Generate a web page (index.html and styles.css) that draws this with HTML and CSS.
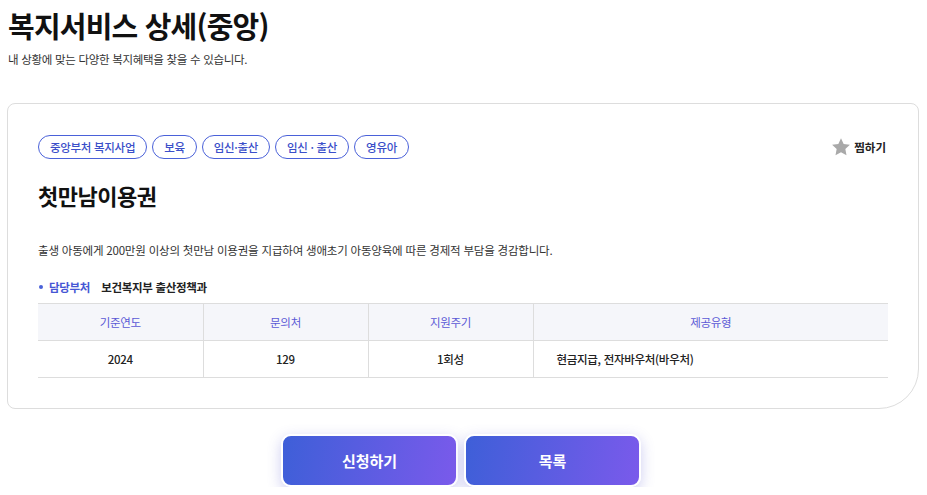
FILE: index.html
```html
<!DOCTYPE html>
<html lang="ko">
<head>
	<meta charset="utf-8">
	<title>복지서비스 상세(중앙)</title>
	<link rel="stylesheet" href="styles.css">
</head>
<body>
	<div class="page">
		<div class="page_head">
			<h1>복지서비스 상세(중앙)</h1>
			<p>내 상황에 맞는 다양한 복지혜택을 찾을 수 있습니다.</p>
		</div>

		<div class="card">
			<div class="card_top">
				<ul class="tags">
					<li>중앙부처 복지사업</li>
					<li>보육</li>
					<li>임신·출산</li>
					<li>임신 · 출산</li>
					<li>영유아</li>
				</ul>
				<button class="fav" type="button">
					<svg width="20" height="20" viewBox="0 0 24 24"><path d="M12 1.5l3.2 6.9 7.5.9-5.5 5.2 1.4 7.5L12 18.3 5.4 22l1.4-7.5L1.3 9.3l7.5-.9z" fill="#a9a9a9"/></svg>
					찜하기
				</button>
			</div>

			<h2 class="svc_title">첫만남이용권</h2>
			<p class="svc_desc">출생 아동에게 200만원 이상의 첫만남 이용권을 지급하여 생애초기 아동양육에 따른 경제적 부담을 경감합니다.</p>

			<dl class="dept">
				<dt>담당부처</dt>
				<dd>보건복지부 출산정책과</dd>
			</dl>

			<table class="info">
				<thead>
					<tr>
						<th class="c1">기준연도</th>
						<th class="c2">문의처</th>
						<th class="c3">지원주기</th>
						<th>제공유형</th>
					</tr>
				</thead>
				<tbody>
					<tr>
						<td>2024</td>
						<td>129</td>
						<td>1회성</td>
						<td class="left">현금지급, 전자바우처(바우처)</td>
					</tr>
				</tbody>
			</table>
		</div>

		<div class="actions">
			<a class="btn" href="#">신청하기</a>
			<a class="btn" href="#">목록</a>
		</div>
	</div>
</body>
</html>
```

FILE: styles.css
```css
* { box-sizing: border-box; }
html, body { margin: 0; padding: 0; }
body { font-family: "Noto Sans CJK KR", "Noto Sans", sans-serif; color: #222; background: #fff; }

.page { padding: 0 8px 0 7px; }

.page_head h1 { margin: 0; padding: 4px 0 0 1px; font-size: 29px; font-weight: 700; line-height: 42px; letter-spacing: -0.8px; color: #111; }
.page_head p { margin: 5px 0 0 1px; font-size: 11.5px; line-height: 16px; letter-spacing: -0.3px; color: #333; }

.card { margin-top: 36px; padding: 31px 30px 30px 30px; border: 1px solid #ddd; border-radius: 8px 8px 40px 8px; }
.card_top { display: flex; justify-content: space-between; align-items: center; }

.tags { display: flex; gap: 5px; margin: 0; padding: 0; list-style: none; }
.tags li { height: 24px; padding: 0 11px; border: 1px solid #4a61d9; border-radius: 12px; font-size: 11.5px; font-weight: 500; line-height: 22px; letter-spacing: -0.3px; color: #3b4fc9; }

.fav { display: flex; align-items: center; gap: 3px; margin-right: 2px; padding: 0; border: 0; background: none; font-family: inherit; font-size: 11.5px; font-weight: 700; color: #222; }

.svc_title { margin: 21px 0 0; font-size: 22px; font-weight: 700; line-height: 30px; letter-spacing: -0.5px; color: #111; }
.svc_desc { margin: 32px 0 0; font-size: 11.5px; line-height: 16px; letter-spacing: -0.2px; color: #333; }

.dept { display: flex; align-items: center; margin: 21px 0 0; font-size: 11.5px; line-height: 16px; letter-spacing: -0.3px; }
.dept dt { position: relative; padding-left: 11px; font-weight: 700; color: #4656d4; }
.dept dt:before { content: ""; position: absolute; left: 1px; top: 6px; width: 4px; height: 4px; border-radius: 50%; background: #4a61d9; }
.dept dd { margin: 0 0 0 11px; font-weight: 700; color: #222; }

.info { width: 100%; margin-top: 8px; border-collapse: collapse; font-size: 11.5px; letter-spacing: -0.3px; }
.info th, .info td { height: 37px; border-top: 1px solid #ddd; border-bottom: 1px solid #ddd; text-align: center; }
.info th + th, .info td + td { border-left: 1px solid #ddd; }
.info th { background: #f5f6fa; font-weight: 400; color: #5b59d6; }
.info td { font-weight: 500; color: #222; }
.info .c1, .info .c2, .info .c3 { width: 165px; }
.info td.left { padding-left: 23px; text-align: left; }

.actions { display: flex; justify-content: center; gap: 6px; margin: 25px 0 0 -4px; }
.btn { display: flex; align-items: center; justify-content: center; width: 177px; height: 53px; border: 2px solid #fff; border-radius: 10px; background: linear-gradient(100deg, #3e5fd8, #7a5aeb); box-shadow: 0 4px 14px rgba(90, 90, 210, .3); font-size: 15px; font-weight: 700; color: #fff; text-decoration: none; }
```
